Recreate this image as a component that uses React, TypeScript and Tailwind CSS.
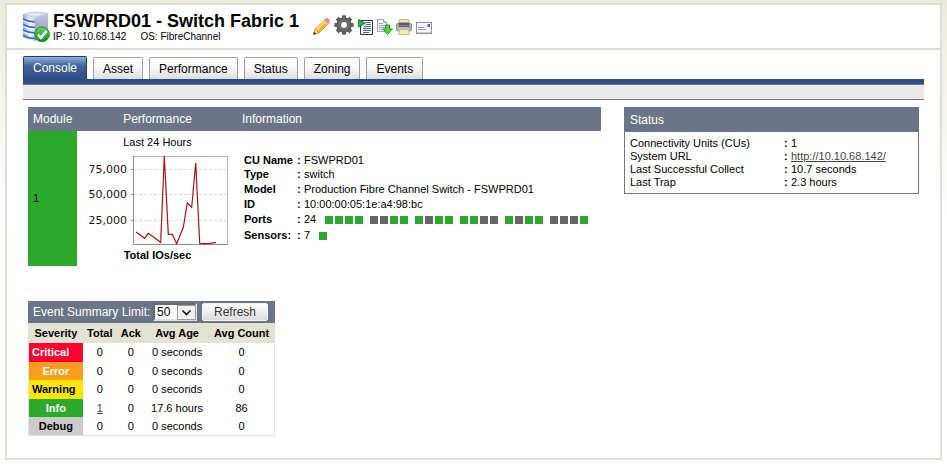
import { useState } from 'react'
import type { ReactNode } from 'react'

interface Severity {
  name: string
  className: string
  total: number
  ack: number
  avgAge: string
  avgCount: number
}

const tabs = ['Console', 'Asset', 'Performance', 'Status', 'Zoning', 'Events']

// 1 = port online, 0 = port offline
const portGroups = ['1111', '0011', '1011', '1100', '1011', '0001']

const severities: Severity[] = [
  { name: 'Critical', className: 'bg-[#ff0033] text-white text-left pl-[3px]', total: 0, ack: 0, avgAge: '0 seconds', avgCount: 0 },
  { name: 'Error', className: 'bg-[#f99d1c] text-white', total: 0, ack: 0, avgAge: '0 seconds', avgCount: 0 },
  { name: 'Warning', className: 'bg-[#ffe500] text-black text-left pl-[3px]', total: 0, ack: 0, avgAge: '0 seconds', avgCount: 0 },
  { name: 'Info', className: 'bg-[#2ca92c] text-white', total: 1, ack: 0, avgAge: '17.6 hours', avgCount: 86 },
  { name: 'Debug', className: 'bg-[#cccccc] text-black', total: 0, ack: 0, avgAge: '0 seconds', avgCount: 0 },
]

const gearTeeth = [0, 45, 90, 135, 180, 225, 270, 315]

function ServerIcon() {
  return (
    <svg width="28" height="31" viewBox="0 0 28 31" aria-hidden="true">
      <defs>
        <linearGradient id="serverFront" x1="0" y1="0" x2="1" y2="0">
          <stop offset="0" stopColor="#8ea6cf" />
          <stop offset="0.6" stopColor="#eef3fb" />
          <stop offset="1" stopColor="#c3d0e8" />
        </linearGradient>
        <linearGradient id="serverSide" x1="0" y1="0" x2="0" y2="1">
          <stop offset="0" stopColor="#c9cbe0" />
          <stop offset="1" stopColor="#7c84a8" />
        </linearGradient>
        <linearGradient id="okBadge" x1="0" y1="0" x2="0" y2="1">
          <stop offset="0" stopColor="#63d35e" />
          <stop offset="1" stopColor="#0f8f1a" />
        </linearGradient>
      </defs>
      <path d="M1 3.5 Q8 1 14 1 L26 2.5 L13 6.5 Z" fill="#e3e4ee" stroke="#a5a9c0" strokeWidth="0.6" />
      <path d="M1 3.5 Q7 6.5 13 6.5 V30 Q6 29.5 1 26 Z" fill="url(#serverFront)" />
      <path d="M13 6.5 L26 2.5 V24 L13 30 Z" fill="url(#serverSide)" />
      <path d="M1 8 Q7 11 13 11 M1 13.5 Q7 16.5 13 16.5 M1 19 Q7 22 13 22 M1 24.5 Q7 27.5 13 27.5" stroke="#2f6fd2" strokeWidth="1.6" fill="none" />
      <path d="M1 9.8 Q7 12.8 13 12.8 M1 15.3 Q7 18.3 13 18.3 M1 20.8 Q7 23.8 13 23.8" stroke="#ffffff" strokeWidth="0.9" fill="none" />
      <circle cx="20" cy="23.3" r="7.4" fill="url(#okBadge)" stroke="#0c7d17" strokeWidth="0.8" />
      <path d="M15.8 23.6 L18.9 26.7 L24.6 19.8" stroke="#ffffff" strokeWidth="2.6" fill="none" />
    </svg>
  )
}

function PencilIcon() {
  return (
    <svg width="17" height="17" viewBox="0 0 17 17" aria-hidden="true">
      <path d="M0.6 16.4 L2.2 11.2 L11.5 2 L15.2 5.7 L5.8 15 Z" fill="#f6b722" stroke="#c98316" strokeWidth="0.8" />
      <path d="M3.4 11.8 L11.9 3.4" stroke="#ffe27a" strokeWidth="1.8" />
      <path d="M0.6 16.4 L2.2 11.2 L5.8 15 Z" fill="#f5d9a8" stroke="#a87b3d" strokeWidth="0.5" />
      <path d="M0.4 16.6 L1.2 13.9 L3.2 15.8 Z" fill="#222222" />
      <path d="M10.4 3.1 L11.8 1.7 L15.4 5.3 L14 6.7 Z" fill="#d9d9d9" />
      <path d="M11.6 1.9 L13 0.6 Q14.2 0 15.3 1.1 L16.2 2.1 Q16.9 3.2 16.2 4.2 L15.2 5.5 Z" fill="#f08a70" stroke="#cf6a52" strokeWidth="0.5" />
    </svg>
  )
}

function GearIcon() {
  return (
    <svg width="20" height="20" viewBox="0 0 20 20" aria-hidden="true">
      {gearTeeth.map(angle => (
        <path key={angle} d="M8.2 0.3 L11.8 0.3 L12.6 5 L7.4 5 Z" fill="#5d5d5d" transform={`rotate(${angle} 10 10)`} />
      ))}
      <circle cx="10" cy="10" r="5.2" fill="none" stroke="#5d5d5d" strokeWidth="4.6" />
      <circle cx="10" cy="10" r="4.8" fill="none" stroke="#7a7a7a" strokeWidth="1.2" />
    </svg>
  )
}

function ReportIcon() {
  return (
    <svg width="15" height="16" viewBox="0 0 15 16" aria-hidden="true">
      <path d="M2.5 1.5 H14.5 V15.5 H2.5 Z" fill="#ffffff" stroke="#20324f" />
      <path d="M7 3.5 H13 M8 5.5 H13 M5 9.5 H13 M5 11.5 H13 M5 13.5 H11" stroke="#4a6790" />
      <path d="M6 7.5 H13" stroke="#4a6790" />
      <path d="M0.5 0.5 L7.5 4.2 L0.5 8 Z" fill="#24b44b" stroke="#0c7a2a" strokeWidth="0.8" />
    </svg>
  )
}

function ExportIcon() {
  return (
    <svg width="16" height="16" viewBox="0 0 16 16" aria-hidden="true">
      <path d="M0.5 0.5 H6.5 L9.5 3.5 V12.5 H0.5 Z" fill="#fbfcff" stroke="#9aa3b5" />
      <path d="M6.5 0.5 V3.5 H9.5" fill="#dfe4ee" stroke="#9aa3b5" />
      <path d="M2 4.5 H6 M2 6.5 H8 M2 8.5 H8 M2 10.5 H6" stroke="#8da0c6" />
      <path d="M8.5 6 H12.5 V10 H15.4 L10.5 15.4 L5.8 10 H8.5 Z" fill="#4fd83c" stroke="#159a19" />
    </svg>
  )
}

function PrinterIcon() {
  return (
    <svg width="16" height="16" viewBox="0 0 16 16" aria-hidden="true">
      <path d="M3.5 0.5 H12.5 V6 H3.5 Z" fill="#f5e6ad" stroke="#c9b87c" />
      <rect x="0.5" y="4.5" width="15" height="7.5" rx="1.5" fill="#b9bec6" stroke="#8a8f98" />
      <path d="M2.5 3.5 H13.5 V8 H2.5 Z" fill="#5a5e66" />
      <path d="M3 6.5 H13" stroke="#7f858e" />
      <rect x="13" y="8" width="2" height="2" fill="#7aa3e0" />
      <path d="M3.5 10.5 H12.5 L13.3 15.5 H2.7 Z" fill="#f8eab4" stroke="#cdbb7e" />
    </svg>
  )
}

function MailIcon() {
  return (
    <svg width="16" height="16" viewBox="0 0 16 16" aria-hidden="true">
      <rect x="0.5" y="3.5" width="15" height="11" fill="#f4f6fa" stroke="#8a909c" />
      <path d="M1 13.5 H15" stroke="#c7ccd8" />
      <path d="M2 8.5 H8 M2 10.5 H10" stroke="#9ba4b6" />
      <rect x="11.5" y="5" width="2.5" height="3" fill="#3f62c8" />
    </svg>
  )
}

const actions: { label: string; className: string; icon: ReactNode }[] = [
  { label: 'Edit', className: 'mr-1', icon: <PencilIcon /> },
  { label: 'Settings', className: 'mr-1 self-start', icon: <GearIcon /> },
  { label: 'Report', className: 'mr-1', icon: <ReportIcon /> },
  { label: 'Export', className: 'mr-[3px]', icon: <ExportIcon /> },
  { label: 'Print', className: 'mr-1', icon: <PrinterIcon /> },
  { label: 'Email', className: '', icon: <MailIcon /> },
]

function IoChart() {
  return (
    <svg width="148" height="96" viewBox="0 0 148 96" className="mr-auto ml-[7px] block" role="img" aria-label="Total IOs/sec">
      <path d="M50 17.5 H143 M50 42.5 H143 M50 68.5 H143" stroke="#dcdcdc" strokeDasharray="3 2" fill="none" />
      <path d="M49.5 4.5 H143.5 V92.5" stroke="#b8b8b8" fill="none" />
      <path d="M49.5 4 V92.5 H144 M47 17.5 H50 M47 42.5 H50 M47 68.5 H50" stroke="#8c8c8c" fill="none" />
      <polyline
        points="52,80 60.7,86.3 64.3,81.3 76.7,90.3 80.3,4 84.3,82.3 88.3,82.3 92.7,91.7 99.3,75.3 103.3,51 107.7,55.3 111.7,11 115.7,91.3 120,91.7 126,91.3 132,90.3"
        stroke="#a01418"
        strokeWidth="1.2"
        fill="none"
      />
      <g className="font-['DejaVu_Sans',sans-serif] text-[11px]" fill="#111111" textAnchor="end">
        <text x="43" y="21">75,000</text>
        <text x="43" y="46">50,000</text>
        <text x="43" y="72">25,000</text>
      </g>
    </svg>
  )
}

function InfoRow({ label, className, children }: { label: string; className: string; children: ReactNode }) {
  return (
    <div className={`flex items-center ${className}`}>
      <dt className="w-[53px] font-bold whitespace-nowrap">{label}</dt>
      <dd className="flex items-center whitespace-nowrap">
        <b className="w-[7px]">:</b>
        {children}
      </dd>
    </div>
  )
}

function StatusRow({ label, children }: { label: string; children: ReactNode }) {
  return (
    <div className="flex h-[13px] items-center">
      <dt className="w-[154px]">{label}</dt>
      <dd className="flex">
        <b className="w-[7px]">:</b>
        {children}
      </dd>
    </div>
  )
}

export default function App() {
  const [activeTab, setActiveTab] = useState('Console')
  const [limit, setLimit] = useState('50')

  return (
    <div className="flex min-h-screen flex-col bg-linear-to-b from-[#ebebdd] to-white to-[220px] px-[5px] pt-[3px] pb-[6px] font-['Liberation_Sans',Arial,sans-serif] text-[11px] text-black">
      <div className="flex-1 border-2 border-[#deded6] bg-white">
        {/* Header */}
        <header className="flex border-b-2 border-[#deded6] pt-[6px] pb-[6px] pl-[15px]">
          <ServerIcon />
          <div className="ml-[3px]">
            <h1 className="text-lg leading-5 font-bold whitespace-nowrap">FSWPRD01 - Switch Fabric 1</h1>
            <p className="flex gap-[14px] text-[10px] leading-[11px]">
              <span>IP: 10.10.68.142</span>
              <span>OS: FibreChannel</span>
            </p>
          </div>
          <div className="mt-1 ml-[14px] flex h-5 items-end">
            {actions.map(action => (
              <button key={action.label} type="button" aria-label={action.label} className={action.className}>
                {action.icon}
              </button>
            ))}
          </div>
        </header>

        <main className="pt-[6px] pr-4 pl-4">
          {/* Tabs */}
          <nav className="flex items-end gap-[6px] text-xs">
            {tabs.map(tab => (
              <button
                key={tab}
                type="button"
                onClick={() => setActiveTab(tab)}
                className={
                  tab === activeTab
                    ? 'h-[23px] rounded-t-xs border border-b-0 border-[#26386a] bg-linear-to-b from-[#8fb4d8] via-[#41629a] via-40% to-[#304d80] px-[9px] text-white'
                    : 'h-[22px] rounded-t-xs border border-b-0 border-[#a0a0a0] bg-linear-to-b from-white via-[#fbfbfb] via-40% to-[#dedede] px-[9px] text-black'
                }
              >
                {tab}
              </button>
            ))}
          </nav>
          <div className="h-[5px] bg-[#304d80]" />
          <div className="h-4 border-y border-[#6b7587] bg-[#ebebeb]" />

          <div className="mt-[7px] mr-[5px] ml-[5px] flex items-start gap-[23px]">
            {/* Modules */}
            <table className="flex-1 border-collapse">
              <thead>
                <tr className="h-6 bg-[#6b7587] text-xs text-white">
                  <th className="w-[49px] pl-[5px] text-left font-normal">Module</th>
                  <th className="w-[161px] font-normal">Performance</th>
                  <th className="w-[363px] pl-1 text-left font-normal">Information</th>
                </tr>
              </thead>
              <tbody>
                <tr className="h-[135px]">
                  <td className="bg-[#2ca92c] pl-[5px]">1</td>
                  <td className="text-center align-top">
                    <div className="pt-1 leading-[14px]">Last 24 Hours</div>
                    <div className="pt-[3px]">
                      <IoChart />
                    </div>
                    <div className="leading-[14px] font-bold">Total IOs/sec</div>
                  </td>
                  <td className="pt-[22px] pl-[6px] align-top">
                    <dl>
                      <InfoRow label="CU Name" className="h-[14px]">FSWPRD01</InfoRow>
                      <InfoRow label="Type" className="h-[15px]">switch</InfoRow>
                      <InfoRow label="Model" className="h-[15px]">Production Fibre Channel Switch - FSWPRD01</InfoRow>
                      <InfoRow label="ID" className="h-[15px]">10:00:00:05:1e:a4:98:bc</InfoRow>
                      <InfoRow label="Ports" className="h-[15px]">
                        24
                        <span className="ml-[9px] flex gap-[7px]">
                          {portGroups.map((group, i) => (
                            <span key={i} className="flex gap-[2px]">
                              {group.split('').map((port, j) => (
                                <span key={j} className={`h-2 w-2 ${port === '1' ? 'bg-[#2ca92c]' : 'bg-[#666666]'}`} />
                              ))}
                            </span>
                          ))}
                        </span>
                      </InfoRow>
                      <InfoRow label="Sensors:" className="mt-px h-[15px]">
                        7
                        <span className="ml-[9px] h-2 w-2 bg-[#2ca92c]" />
                      </InfoRow>
                    </dl>
                  </td>
                </tr>
              </tbody>
            </table>

            {/* Status */}
            <section className="w-[295px] border border-[#6b7587]">
              <h2 className="flex h-6 items-center bg-[#6b7587] pl-[5px] text-xs text-white">Status</h2>
              <dl className="pt-[5px] pb-1 pl-[5px]">
                <StatusRow label="Connectivity Units (CUs)">1</StatusRow>
                <StatusRow label="System URL">
                  <a href="http://10.10.68.142/" className="text-[#444444] underline">http://10.10.68.142/</a>
                </StatusRow>
                <StatusRow label="Last Successful Collect">10.7 seconds</StatusRow>
                <StatusRow label="Last Trap">2.3 hours</StatusRow>
              </dl>
            </section>
          </div>

          {/* Event summary */}
          <section className="mt-[35px] mb-[21px] ml-[5px] w-[247px]">
            <div className="flex h-[22px] items-center bg-[#6b7587] pl-[5px] text-xs text-white">
              <label htmlFor="limit" className="w-[120px] whitespace-nowrap">Event Summary Limit:</label>
              <div className="relative h-[18px] w-11">
                <select
                  id="limit"
                  value={limit}
                  onChange={e => setLimit(e.target.value)}
                  className="block h-[18px] w-11 appearance-none border-2 border-t-[#696969] border-r-[#e3e3e3] border-b-[#e3e3e3] border-l-[#696969] bg-white pl-[2px] text-xs leading-3 text-black"
                >
                  <option>10</option>
                  <option>50</option>
                  <option>100</option>
                </select>
                <svg width="19" height="15" viewBox="0 0 19 15" className="pointer-events-none absolute top-[2px] right-[1px]" aria-hidden="true">
                  <rect x="0.5" y="0.5" width="18" height="14" fill="#f0f0f0" stroke="#9a9a9a" />
                  <path d="M5.5 5.5 L9.5 9.5 L13.5 5.5" stroke="#111111" strokeWidth="1.6" fill="none" />
                </svg>
              </div>
              <button
                type="button"
                className="ml-[5px] h-[18px] w-[66px] rounded-xs border border-[#f4f4f4] bg-linear-to-b from-white to-[#dcdcdc] text-xs leading-3 text-[#333333]"
              >
                Refresh
              </button>
            </div>
            <table className="w-full border-collapse border border-[#e3e2d5] text-center">
              <thead>
                <tr className="h-[19px] bg-[#e3e2d5] leading-[18px] whitespace-nowrap">
                  <th className="w-[54px]">Severity</th>
                  <th className="w-[34px]">Total</th>
                  <th className="w-7">Ack</th>
                  <th className="w-16">Avg Age</th>
                  <th className="w-[65px]">Avg Count</th>
                </tr>
              </thead>
              <tbody>
                {severities.map(row => (
                  <tr key={row.name} className="h-[18px] leading-[18px] odd:h-[19px]">
                    <th className={row.className}>{row.name}</th>
                    <td>{row.total > 0 ? <a href="#events" className="text-[#444444] underline">{row.total}</a> : row.total}</td>
                    <td>{row.ack}</td>
                    <td>{row.avgAge}</td>
                    <td>{row.avgCount}</td>
                  </tr>
                ))}
              </tbody>
            </table>
          </section>
        </main>
      </div>
    </div>
  )
}
